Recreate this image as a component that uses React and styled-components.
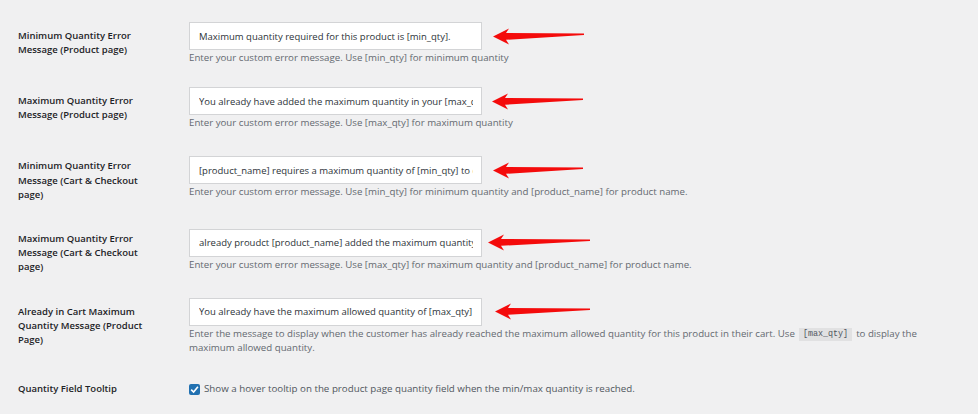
import React from "react";
import styled, { createGlobalStyle } from "styled-components";

const GlobalStyle = createGlobalStyle`
  html, body {
    margin: 0;
    background: #f0f0f1;
  }
  body {
    font-family: "Open Sans", "Noto Sans", sans-serif;
    color: #1d2327;
  }
`;

const Page = styled.div`
  padding: 14px 0 0 18px;
`;

const FormTable = styled.table`
  border-collapse: collapse;
  border-spacing: 0;
`;

const Label = styled.th`
  width: 140px;
  padding: 15px 31px 15px 0;
  text-align: left;
  vertical-align: top;
  font-size: 9.5px;
  font-weight: 600;
  line-height: 14.2px;
  color: #1d2327;
`;

const Cell = styled.td`
  padding: 8px 10px 8px 0;
  vertical-align: middle;
`;

const FieldRow = styled.div`
  display: flex;
  align-items: center;
`;

const TextInput = styled.input`
  box-sizing: border-box;
  width: 293px;
  height: 28px;
  margin: 0;
  padding: 0 8px 0 9px;
  border: 1px solid #d3d4d6;
  border-radius: 0;
  background: #fff;
  font-family: inherit;
  font-size: 9.5px;
  color: #2c3338;
  outline: none;
`;

const Arrow = styled.svg`
  display: block;
  flex: none;
  margin-left: ${(p) => p.$gap}px;
`;

const Description = styled.p`
  margin: 1px 0 ${(p) => (p.$tight ? 3 : 5.5)}px;
  max-width: 740px;
  font-size: 9.7px;
  line-height: 14.7px;
  color: #646970;
`;

const Code = styled.code`
  display: inline-block;
  margin: 0 4px;
  padding: 0 4px;
  vertical-align: middle;
  background: #e1e1e2;
  font-family: "Liberation Mono", "DejaVu Sans Mono", monospace;
  font-size: 8.4px;
  line-height: 13px;
  color: #50575e;
`;

const CheckLabel = styled.label`
  display: flex;
  align-items: center;
  gap: 4px;
  font-size: 9.75px;
  line-height: 14px;
  color: #50575e;
`;

const CheckBox = styled.span`
  display: inline-flex;
  align-items: center;
  justify-content: center;
  width: 11px;
  height: 11px;
  border-radius: 2px;
  background: #2271b1;
`;

// red pointer drawn to the right of a field, tip on the left
const Pointer = ({ gap = 11, len = 91 }) => (
  <Arrow $gap={gap} width={len} height={19} viewBox={`0 0 ${len} 19`}>
    <path
      d={`M0 9.5 L16 1.5 L13 6 L${len} 6.6 L${len} 8 L13 12.8 L16 17.6 Z`}
      fill="#f40b0b"
    />
  </Arrow>
);

const messages = [
  {
    label: "Minimum Quantity Error Message (Product page)",
    value: "Maximum quantity required for this product is [min_qty].",
    desc: "Enter your custom error message. Use [min_qty] for minimum quantity",
    arrow: { gap: 11, len: 91 },
  },
  {
    label: "Maximum Quantity Error Message (Product page)",
    value: "You already have added the maximum quantity in your [max_qty] cart.",
    desc: "Enter your custom error message. Use [max_qty] for maximum quantity",
    arrow: { gap: 10, len: 91 },
  },
  {
    label: "Minimum Quantity Error Message (Cart & Checkout page)",
    value: "[product_name] requires a maximum quantity of [min_qty] to checkout.",
    desc:
      "Enter your custom error message. Use [min_qty] for minimum quantity and [product_name] for product name.",
    arrow: { gap: 11, len: 90 },
  },
  {
    label: "Maximum Quantity Error Message (Cart & Checkout page)",
    value: "already proudct [product_name] added the maximum quantity of [max_qty].",
    desc:
      "Enter your custom error message. Use [max_qty] for maximum quantity and [product_name] for product name.",
    arrow: { gap: 6, len: 102 },
  },
];

const App = () => (
  <Page>
    <GlobalStyle />
    <FormTable>
      <tbody>
        {messages.map((m) => (
          <tr key={m.label}>
            <Label scope="row">{m.label}</Label>
            <Cell>
              <FieldRow>
                <TextInput type="text" defaultValue={m.value} />
                <Pointer {...m.arrow} />
              </FieldRow>
              <Description>{m.desc}</Description>
            </Cell>
          </tr>
        ))}
        <tr>
          <Label scope="row">Already in Cart Maximum Quantity Message (Product Page)</Label>
          <Cell>
            <FieldRow>
              <TextInput
                type="text"
                defaultValue="You already have the maximum allowed quantity of [max_qty] in your cart."
              />
              <Pointer gap={13} len={95} />
            </FieldRow>
            <Description $tight>
              Enter the message to display when the customer has already reached the
              maximum allowed quantity for this product in their cart. Use
              <Code>[max_qty]</Code>
              to display the maximum allowed quantity.
            </Description>
          </Cell>
        </tr>
        <tr>
          <Label scope="row">Quantity Field Tooltip</Label>
          <Cell>
            <CheckLabel>
              <CheckBox>
                <svg width="9" height="9" viewBox="0 0 10 10">
                  <path
                    d="M1.3 5.2 L4 7.8 L8.8 2"
                    fill="none"
                    stroke="#fff"
                    strokeWidth="1.8"
                  />
                </svg>
              </CheckBox>
              Show a hover tooltip on the product page quantity field when the min/max
              quantity is reached.
            </CheckLabel>
          </Cell>
        </tr>
      </tbody>
    </FormTable>
  </Page>
);

export default App;
